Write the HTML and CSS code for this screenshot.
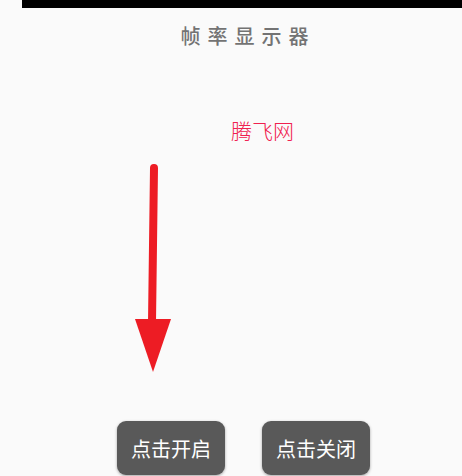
FILE: index.html
```html
<!DOCTYPE html>
<html lang="zh">
<head>
  <meta charset="UTF-8">
  <meta name="viewport" content="width=device-width, initial-scale=1.0">
  <title>帧率显示器</title>
  <link rel="stylesheet" href="styles.css">
</head>
<body>
  <div class="status-bar"></div>

  <div class="title">帧率显示器</div>

  <div class="brand">腾飞网</div>

  <div class="arrow-area">
    <svg class="arrow" width="50" height="215" viewBox="0 0 50 215">
      <!-- shaft -->
      <path d="M21 4 L19 158" stroke="#ed1c24" stroke-width="8" stroke-linecap="round" fill="none"/>
      <!-- head -->
      <polygon points="2,155 38,155 20,208" fill="#ed1c24"/>
    </svg>
  </div>

  <div class="button-row">
    <button class="btn">点击开启</button>
    <button class="btn">点击关闭</button>
  </div>
</body>
</html>
```

FILE: styles.css
```css
body {
  margin: 0;
  padding: 0;
  width: 462px;
  height: 476px;
  overflow: hidden;
  background-color: #fafafa;
  font-family: "Noto Sans CJK SC", "Noto Sans", sans-serif;
}

.status-bar {
  height: 8px;
  margin-left: 22px;
  background-color: #000;
}

.title {
  margin-top: 16px;
  padding-left: 34px;
  text-align: center;
  font-size: 20px;
  font-weight: 500;
  line-height: 24px;
  letter-spacing: 7px;
  color: #737373;
}

.brand {
  margin-top: 70px;
  margin-left: 231px;
  font-size: 21px;
  font-weight: 300;
  line-height: 24px;
  color: #f0204f;
}

.arrow-area {
  height: 257px;
  padding-left: 133px;
}

.arrow {
  display: block;
  margin-top: 22px;
}

.button-row {
  display: flex;
  gap: 37px;
  padding-left: 117px;
}

.btn {
  width: 108px;
  height: 54px;
  border: none;
  border-radius: 9px;
  background-color: #595959;
  color: #fff;
  font-family: inherit;
  font-size: 20px;
  box-shadow: 0 1px 3px rgba(0, 0, 0, 0.35);
  padding: 0;
}
```
